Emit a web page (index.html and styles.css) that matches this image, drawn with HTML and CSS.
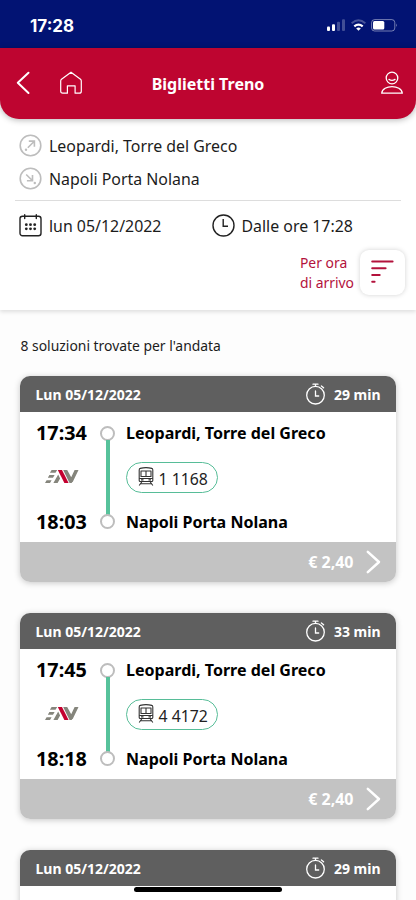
FILE: index.html
```html
<!DOCTYPE html>
<html lang="it">
<head>
<meta charset="utf-8">
<meta name="viewport" content="width=device-width, initial-scale=1">
<title>Biglietti Treno</title>
<link rel="stylesheet" href="styles.css">
</head>
<body>
<svg class="defs" width="0" height="0" aria-hidden="true">
  <symbol id="stopwatch" viewBox="0 0 20 22">
    <g fill="none" stroke="#fff" stroke-width="1.3" stroke-linecap="round">
      <circle cx="9.5" cy="12.2" r="8.8"/>
      <path d="M7 1.2h5M9.5 1.2v2M15.4 3l2.2 1.8M9.5 8v5h3.2"/>
    </g>
  </symbol>
  <symbol id="eav" viewBox="0 0 34 13">
    <g fill="#85857c">
      <path d="M6.6 0h5.6l-1.7 2.8H4.9zM4.4 5h5.2L8 7.8H2.8zM1.6 10.2h5L5 13H0z"/>
      <path d="M13.2 4.6l1.9 4L12.6 13H8.4zM18.2 0h4l5.8 10.4-1.3 2.6h-2.2zM29.6 0h3.9l-5.9 12.2-2-3.6z"/>
    </g>
    <path fill="#c3002f" d="M12.8 0H17l6.6 13h-4.2z"/>
  </symbol>
  <symbol id="train" viewBox="0 0 16 19">
    <g fill="none" stroke="#333" stroke-width="1.1" stroke-linejoin="round">
      <path d="M2.2 1.4Q8-.2 13.8 1.4q1 .3 1 1.5v10.6q0 1-1 1H2.2q-1 0-1-1V2.9q0-1.2 1-1.5z"/>
      <path d="M3 4h10v5.5H3zM8 4v5.5M1.2 11.5h13.6M4 14.5l-2.8 4M12 14.5l2.8 4M2.6 16.8h10.8"/>
    </g>
    <path fill="#333" d="M3 12.3h2.5v1.3H3zM10.5 12.3H13v1.3h-2.5z"/>
  </symbol>
  <symbol id="next" viewBox="0 0 15 24">
    <path d="M1.8 1.8L13 12 1.8 22.2" fill="none" stroke="#fff" stroke-width="2.5" stroke-linecap="round" stroke-linejoin="round"/>
  </symbol>
</svg>

<div class="screen">
  <div class="status">
    <span class="clock">17:28</span>
    <svg width="72" height="14" viewBox="0 0 72 14">
      <g fill="#fff">
        <rect x="1" y="8.5" width="3" height="4.5" rx="1"/>
        <rect x="6" y="6.3" width="3" height="6.7" rx="1"/>
        <rect x="11" y="3.7" width="3" height="9.3" rx="1" opacity=".25"/>
        <rect x="16" y="1.3" width="3" height="11.7" rx="1" opacity=".25"/>
        <path d="M32.5 12.8l-2.3-2.3q2.3-1.8 4.6 0z"/>
      </g>
      <path d="M28.3 8.4q4.2-3.5 8.4 0" fill="none" stroke="#fff" stroke-width="2.3"/>
      <path d="M25.6 5.3q6.9-6 13.8 0" fill="none" stroke="#fff" stroke-width="1.8" opacity=".27"/>
      <rect x="45.6" y="1.6" width="23.2" height="11.4" rx="3" fill="none" stroke="#fff" opacity=".45"/>
      <rect x="47" y="3" width="11.3" height="8.6" rx="1.5" fill="#fff"/>
      <path d="M70 5.5q1.6 1.8 0 3.6z" fill="#fff" opacity=".5"/>
    </svg>
  </div>

  <div class="top">
    <header class="bar">
      <svg class="back" width="14" height="24" viewBox="0 0 14 24"><path d="M12.5 1.8L1.8 11.8 12.5 22" fill="none" stroke="#fff" stroke-width="2" stroke-linecap="round" stroke-linejoin="round"/></svg>
      <svg class="home" width="24" height="24" viewBox="0 0 24 24"><path d="M2.5 8.2L12 1.2l9.5 7q.8.7.8 1.8v10.2q0 2-2 2h-4.2v-7.4H8.4v7.4H3.7q-2 0-2-2V10q0-1.1.8-1.8z" fill="none" stroke="#fff" stroke-width="1.2" stroke-linejoin="round"/></svg>
      <h1>Biglietti Treno</h1>
      <svg class="user" width="24" height="24" viewBox="0 0 24 24"><g fill="none" stroke="#fff" stroke-width="1.3" stroke-linecap="round" stroke-linejoin="round"><circle cx="12" cy="7" r="5.8"/><path d="M9 8.4q3 2 6 0M1.7 22.2h20.6C21.5 13.5 2.5 13.5 1.7 22.2z"/></g></svg>
    </header>
  </div>

  <section class="search">
    <div class="place">
      <svg width="23" height="23" viewBox="0 0 23 23"><g fill="none" stroke="#bdbdbd" stroke-width="1.6"><circle cx="11.5" cy="11.5" r="10.3"/><path d="M8.8 13.7l6.5-6.4M9.8 7.1h5.6v5.6"/></g><circle cx="7" cy="15.7" r="1.2" fill="#bdbdbd"/></svg>
      <span>Leopardi, Torre del Greco</span>
    </div>
    <div class="place">
      <svg width="23" height="23" viewBox="0 0 23 23"><g fill="none" stroke="#bdbdbd" stroke-width="1.6"><circle cx="11.5" cy="11.5" r="10.3"/><path d="M7.2 7.5l6.1 6M13.5 8v5.7H7.9"/></g><circle cx="15.8" cy="16" r="1.2" fill="#bdbdbd"/></svg>
      <span>Napoli Porta Nolana</span>
    </div>
    <div class="when">
      <div class="date">
        <svg width="23" height="23" viewBox="0 0 23 23"><g fill="none" stroke="#222" stroke-width="1.4" stroke-linecap="round"><rect x="1" y="2.3" width="21" height="19.5" rx="2.5"/><path d="M5.7 .8v3.8M17.3 .8v3.8"/></g><g fill="#222"><circle cx="7.3" cy="10.7" r="1.4"/><circle cx="11.5" cy="10.7" r="1.4"/><circle cx="15.7" cy="10.7" r="1.4"/><circle cx="7.3" cy="14.8" r="1.4"/><circle cx="11.5" cy="14.8" r="1.4"/><circle cx="15.7" cy="14.8" r="1.4"/></g></svg>
        <span>lun 05/12/2022</span>
      </div>
      <div class="hour">
        <svg width="23" height="23" viewBox="0 0 23 23"><g fill="none" stroke="#222" stroke-width="1.4"><circle cx="11.5" cy="11.5" r="10.5"/><path d="M11.2 5v7.2H16"/></g></svg>
        <span>Dalle ore 17:28</span>
      </div>
    </div>
    <div class="sort">
      <span>Per ora<br>di arrivo</span>
      <div class="sort-btn">
        <svg width="23" height="24" viewBox="0 0 23 24"><path d="M1.2 1.5h20.4M1.2 8.3h13.4M1.2 15h7.5M1.2 21.8h2.4" fill="none" stroke="#b3123c" stroke-width="2" stroke-linecap="round"/></svg>
      </div>
    </div>
  </section>

  <main>
    <p class="count">8 soluzioni trovate per l'andata</p>

    <article class="card">
      <div class="head"><span>Lun 05/12/2022</span><svg width="20" height="22"><use href="#stopwatch"/></svg><span>29 min</span></div>
      <div class="trip">
        <b class="time">17:34</b><i class="ring"></i><b class="stop">Leopardi, Torre del Greco</b>
        <svg class="eav" width="34" height="13"><use href="#eav"/></svg><i class="line"></i><span class="pill"><svg width="16" height="19"><use href="#train"/></svg>1 1168</span>
        <b class="time">18:03</b><i class="ring"></i><b class="stop">Napoli Porta Nolana</b>
      </div>
      <div class="price"><span>€ 2,40</span><svg width="15" height="24"><use href="#next"/></svg></div>
    </article>

    <article class="card">
      <div class="head"><span>Lun 05/12/2022</span><svg width="20" height="22"><use href="#stopwatch"/></svg><span>33 min</span></div>
      <div class="trip">
        <b class="time">17:45</b><i class="ring"></i><b class="stop">Leopardi, Torre del Greco</b>
        <svg class="eav" width="34" height="13"><use href="#eav"/></svg><i class="line"></i><span class="pill"><svg width="16" height="19"><use href="#train"/></svg>4 4172</span>
        <b class="time">18:18</b><i class="ring"></i><b class="stop">Napoli Porta Nolana</b>
      </div>
      <div class="price"><span>€ 2,40</span><svg width="15" height="24"><use href="#next"/></svg></div>
    </article>

    <article class="card">
      <div class="head"><span>Lun 05/12/2022</span><svg width="20" height="22"><use href="#stopwatch"/></svg><span>29 min</span></div>
      <div class="trip"><i class="ring"></i></div>
    </article>
  </main>
  <div class="home-indicator"></div>
</div>
</body>
</html>
```
FILE: styles.css
```css
* { box-sizing: border-box; }
body { margin: 0; font-family: "Noto Sans", sans-serif; color: #1c1c1c; background: #fff; }
svg { display: block; flex: none; overflow: visible; }
.defs { position: absolute; }
.screen { position: relative; width: 416px; height: 900px; overflow: hidden; display: flex; flex-direction: column; background: #fdfdfd; }

.status { flex: none; height: 48px; background: #021373; display: flex; align-items: center; justify-content: space-between; padding: 2px 18px 0 30px; }
.clock { margin-top: 1px; font: 700 17px/20px Inter, sans-serif; color: #fff; }

.top { flex: none; background: #fff; position: relative; }
.bar { height: 70.5px; background: #be0530; border-radius: 0 0 19px 19px; box-shadow: 0 1px 6px rgba(0,0,0,.3); display: grid; grid-template-columns: 43px 40px 1fr 40px 47px; align-items: center; padding: 0 12px 0 16px; }
.bar h1 { margin: 1px 0 0; grid-column: 3; font-size: 16px; line-height: 22px; font-weight: 700; color: #fff; text-align: center; white-space: nowrap; }
.user { grid-column: 5; justify-self: end; }

.search { flex: none; height: 191.5px; padding: 10px 15px 0 19px; background: #fff; box-shadow: 0 2px 4px rgba(0,0,0,.12); font-size: 15.9px; }
.place { height: 33px; display: flex; align-items: center; gap: 7px; }
.place span { padding-top: 1px; }
.when { margin-left: -4px; border-top: 1px solid #ddd; padding: 0 0 0 4px; margin-top: 5px; height: 50px; display: flex; align-items: center; }
.when > div { display: flex; align-items: center; gap: 7px; }
.when span { padding-top: 2px; }
.date { width: 192.5px; }
.sort { display: flex; align-items: center; justify-content: flex-end; gap: 6px; margin: 0 -4px 0 0; font-size: 13.9px; line-height: 20px; color: #b3123c; }
.sort span { padding-top: 1px; }
.sort-btn { width: 45px; height: 45px; border-radius: 9px; background: #fff; box-shadow: 0 0 5px rgba(0,0,0,.18); display: grid; place-items: center; }

main { padding: 26px 20.5px 0 20px; }
.count { margin: 0 0 20px; padding-left: .5px; font-size: 13.9px; line-height: 20px; }
.card { height: 206px; margin-bottom: 31px; border-radius: 10px; overflow: hidden; background: #fff; box-shadow: 0 1px 6px rgba(0,0,0,.22); }
.head { height: 36px; padding: 0 15px 0 15.5px; display: flex; align-items: center; background: #5f5f5f; color: #fff; font-size: 14px; font-weight: 700; }
.head span:first-child { margin-right: auto; }
.head svg { margin: -1px 8px 0 0; }
.trip { height: 130px; padding-left: 16px; display: grid; grid-template-columns: 51px 41px 1fr; grid-template-rows: 42px 47px 41px; align-items: center; color: #000; }
.time { font-size: 19.8px; line-height: 24px; }
.stop { margin-left: -2px; font-size: 16.05px; line-height: 22px; }
.ring { grid-column: 2; justify-self: center; width: 15px; height: 15px; border: 2px solid #bdbdbd; border-radius: 50%; background: #fff; }
.line { justify-self: center; width: 4px; height: 76px; margin: -15px 0; background: #57c29b; }
.eav { justify-self: center; margin-top: -2px; }
.pill { justify-self: start; margin-left: -2px; width: 92px; height: 31px; padding: 2px 0 0 10.5px; border: 1.5px solid #57bd98; border-radius: 16px; display: flex; align-items: center; gap: 5px; font-size: 15.8px; white-space: nowrap; color: #222; }
.pill svg { margin-top: -4px; }
.price { height: 40px; padding-right: 15px; display: flex; align-items: center; justify-content: flex-end; gap: 12px; background: #c3c3c3; color: #fff; font-size: 16px; font-weight: 700; }
.home-indicator { position: absolute; left: 134px; top: 887px; width: 148px; height: 5px; border-radius: 3px; background: #000; }
```
